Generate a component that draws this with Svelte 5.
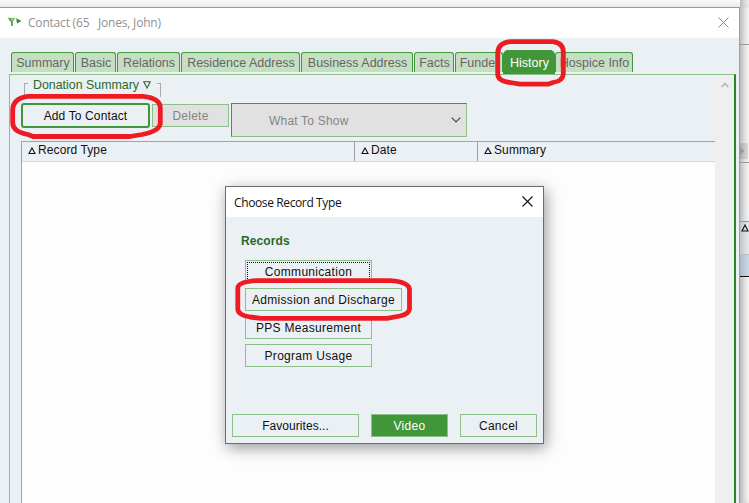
<script>
  const tabs = [
    { name: "Summary", width: 63 },
    { name: "Basic", width: 41 },
    { name: "Relations", width: 63 },
    { name: "Residence Address", width: 119 },
    { name: "Business Address", width: 112 },
    { name: "Facts", width: 40 },
    { name: "Funder", width: 48 },
    { name: "History", width: 52 },
    { name: "Hospice Info", width: 78 }
  ];

  const columns = [
    { name: "Record Type", width: 333 },
    { name: "Date", width: 123 },
    { name: "Summary", width: 237 }
  ];

  const records = [
    "Communication",
    "Admission and Discharge",
    "PPS Measurement",
    "Program Usage"
  ];

  let activeTab = $state("History");
  let showDialog = $state(true);
</script>

<div class="desktop">
  <div class="window">
    <header class="titlebar">
      <svg class="logo" width="14" height="10" viewBox="0 0 14 10">
        <path d="M0 0.5L5 1.5L7 0.5L6 3L4.8 4V9H3V5L1.5 3.5Z" fill="#4fa535" />
        <path d="M3 2.4L5 3.2" stroke="#fff" stroke-width="0.8" />
        <path d="M8.2 1.2L13.5 4L9 6.4Z" fill="#2f8a2f" />
      </svg>
      <span class="title">Contact (65&nbsp;&nbsp; Jones, John)</span>
      <svg class="close" width="11" height="11" viewBox="0 0 11 11">
        <path d="M0.5 0.5L10.5 10.5M10.5 0.5L0.5 10.5" stroke="#888" fill="none" />
      </svg>
    </header>

    <nav class="tabs">
      {#each tabs as tab}
        <button
          class="tab"
          class:active={tab.name === activeTab}
          style="width: {tab.width}px"
          onclick={() => (activeTab = tab.name)}
        >{tab.name}</button>
      {/each}
    </nav>

    <div class="panel">
      <div class="content">
        <div class="legend">
          <i class="bracket left"></i>
          <span>Donation Summary</span>
          <svg width="8" height="8" viewBox="0 0 8 8">
            <path d="M0.8 0.8H7.2L4 7Z" fill="none" stroke="#2a6a2a" stroke-width="1.1" />
          </svg>
          <i class="bracket right"></i>
        </div>

        <div class="toolbar">
          <button class="add" onclick={() => (showDialog = true)}>Add To Contact</button>
          <button class="delete" disabled>Delete</button>
          <button class="select" disabled>
            <span>What To Show</span>
            <svg width="10" height="6" viewBox="0 0 10 6">
              <path d="M0.7 0.7L5 5L9.3 0.7" fill="none" stroke="#444" stroke-width="1.1" />
            </svg>
          </button>
        </div>

        <div class="table">
          <div class="head">
            {#each columns as column}
              <div class="column" style="width: {column.width}px">
                <svg width="8" height="8" viewBox="0 0 8 8">
                  <path d="M4 1L7 6.5H1Z" fill="none" stroke="#111" stroke-width="1.1" />
                </svg>
                <span>{column.name}</span>
              </div>
            {/each}
          </div>
        </div>
      </div>
      <div class="scrollbar">
        <svg width="8" height="6" viewBox="0 0 8 6">
          <path d="M0.7 5L4 1.5L7.3 5" fill="none" stroke="#b5b5b5" stroke-width="1.8" />
        </svg>
      </div>
    </div>
  </div>

  <!-- strip of the window behind -->
  <div class="behind">
    <div class="blank"></div>
    <div class="pane"></div>
    <div class="hscroll">
      <svg width="5" height="8" viewBox="0 0 5 8"><path d="M0 0L4.5 4L0 8Z" fill="#999" /></svg>
    </div>
    <div class="pane2"></div>
    <div class="rowhead">
      <svg width="8" height="8" viewBox="0 0 8 8">
        <path d="M4 1L7 7H1Z" fill="none" stroke="#111" stroke-width="1.1" />
      </svg>
    </div>
    <div class="selected"></div>
    <div class="rest"></div>
  </div>

  {#if showDialog}
    <div class="dialog">
      <header class="dialog-title">
        <span>Choose Record Type</span>
        <button class="x" aria-label="Close" onclick={() => (showDialog = false)}>
          <svg width="11" height="11" viewBox="0 0 11 11">
            <path d="M0.5 0.5L10.5 10.5M10.5 0.5L0.5 10.5" stroke="#111" stroke-width="1.1" />
          </svg>
        </button>
      </header>
      <div class="dialog-body">
        <h2>Records</h2>
        <div class="records">
          {#each records as record, i}
            <button class="btn" class:focus={i === 0} class:wide={i === 1}>{record}</button>
          {/each}
        </div>
        <footer>
          <button class="btn favourites">Favourites...</button>
          <button class="btn video">Video</button>
          <button class="btn cancel" onclick={() => (showDialog = false)}>Cancel</button>
        </footer>
      </div>
    </div>
  {/if}

  <!-- red marker rings -->
  <svg class="marks" width="749" height="503" viewBox="0 0 749 503">
    <path d="M28 96.3H143Q160.3 98 160.3 108V123Q160 131 142 134.5L130 136.5H33L28 134.5Q13 132 12.7 123V110Q13 98 28 96.3Z" />
    <path d="M510 41.7H553Q563.3 43 563.3 52V74Q563 81 553 82.5L548 84.2H520L510 82.5Q497.7 81 497.7 74V53Q498 43 510 41.7Z" />
    <path d="M256 280.7H390Q409.5 282 409.5 290V309Q409 314 400 316L387 318.3H261L250 317Q238 315 237.8 309V288Q238 282 256 280.7Z" />
  </svg>
</div>

<style>
:global(body) {
  margin: 0;
}

.desktop {
  position: relative;
  display: flex;
  width: 749px;
  height: 503px;
  overflow: hidden;
  background: linear-gradient(#fafafa, #ebebeb 7px, #fafafa 8px);
  font-family: "Liberation Sans", Arial, sans-serif;
  font-size: 12px;
}

.desktop * {
  box-sizing: border-box;
}

button {
  padding: 0;
  margin: 0;
  border: none;
  font: inherit;
  white-space: nowrap;
}

svg {
  display: block;
  flex: none;
}

.window {
  display: flex;
  flex-direction: column;
  width: 740px;
  margin-top: 7px;
  border-top: 1px solid #999;
  border-right: 1px solid #9aa0a4;
  background-color: #ebf0f5;
}

.titlebar {
  display: flex;
  height: 30px;
  align-items: center;
  padding: 0 10px 0 8px;
  background-color: white;
  font-family: "Open Sans", "Noto Sans", sans-serif;
  color: #919191;
}

.logo {
  margin-top: -3px;
}

.title {
  margin: -2px 0 0 6px;
  letter-spacing: -0.2px;
  white-space: pre;
}

.close {
  margin-left: auto;
  margin-top: -1px;
}

.tabs {
  display: flex;
  align-items: flex-end;
  height: 36px;
  padding: 0 0 2px 11px;
  gap: 1px;
  margin-right: 80px;
}

.tab {
  height: 20px;
  flex: none;
  padding-left: 1px;
  border: 1px solid #41993b;
  border-bottom: none;
  border-radius: 3px 3px 0 0;
  background-color: #c5dfc2;
  color: #666;
  font-size: 12.5px;
}

.tab.active {
  height: 24px;
  margin: 0 -1px -2px;
  border-radius: 5px 5px 0 0;
  background-color: #41963a;
  color: white;
}

.panel {
  display: flex;
  flex: 1;
  margin: 0 3px 0 9px;
  border: 1px solid #8cc086;
  border-bottom: none;
  border-right: 2px solid #2a8523;
}

.content {
  display: flex;
  flex-direction: column;
  flex: 1;
  padding-left: 11px;
}

.legend {
  display: flex;
  height: 28px;
  padding-left: 3px;
  align-items: flex-start;
  color: #2a6a2a;
  font-size: 12.4px;
  line-height: 20px;
}

.legend svg {
  margin: 6px 0 0 4px;
}

.bracket {
  width: 4px;
  height: 14px;
  margin-top: 8px;
  border: 1px solid #aaa;
  border-bottom: none;
}

.bracket.left {
  border-right: none;
  border-top-left-radius: 1px;
  margin-right: 5px;
}

.bracket.right {
  border-left: none;
  margin-left: 6px;
}

.toolbar {
  display: flex;
  height: 38px;
  align-items: flex-start;
}

.add {
  width: 129px;
  height: 25px;
  border: 2px solid #41963a;
  border-radius: 3px;
  background-color: #ebf0f5;
  color: #111;
  letter-spacing: 0.13px;
}

.delete {
  width: 77px;
  height: 23px;
  margin: 1px 2px 0;
  border: 1px solid #8cc086;
  background-color: #e1e1e1;
  color: #858585;
  letter-spacing: 0.25px;
}

.select {
  display: flex;
  align-items: center;
  justify-content: space-between;
  width: 236px;
  height: 34px;
  padding: 0 5px 0 37px;
  border: 1px solid #8cc086;
  border-top-color: #41963a;
  border-left-color: #41963a;
  background-color: #e1e1e1;
  color: #858585;
  letter-spacing: 0.2px;
}

.select span {
  margin-top: 1px;
}

.table {
  flex: 1;
  border-top: 1px solid #a0a4a8;
  border-left: 1px solid #a0a4a8;
  background-color: #fdfdfd;
}

.head {
  display: flex;
  height: 20px;
  border-bottom: 1px solid #d5d9dc;
  background-color: #ebf0f5;
  color: #111;
}

.column {
  display: flex;
  height: 19px;
  padding-left: 6px;
  align-items: center;
  gap: 2px;
  border-right: 1px solid #a0a4a8;
  line-height: 17px;
  letter-spacing: 0.1px;
}

.column:last-child {
  border-right: none;
}

.column svg {
  margin-top: -2px;
}

.column span {
  margin-top: -2px;
}

.scrollbar {
  display: flex;
  width: 19px;
  justify-content: center;
  padding-top: 7px;
  background-color: #efefef;
}

.behind {
  display: flex;
  flex-direction: column;
  width: 9px;
  box-shadow: inset 8px 0 8px -5px #aaa;
}

.blank {
  height: 45px;
  border-bottom: 1px solid #999;
}

.pane {
  height: 98px;
}

.hscroll {
  height: 16px;
  margin-right: 1px;
  padding-top: 4px;
  background-color: rgba(0, 0, 0, 0.1);
}

.pane2 {
  height: 60px;
  border-top: 1px solid #999;
  margin-top: 3px;
  border-bottom: 1px solid #999;
}

.rowhead {
  height: 33px;
  padding: 2px 0 0 1px;
  border-bottom: 1px solid #bbb;
  background-color: rgba(200, 212, 222, 0.35);
}

.selected {
  height: 22px;
  border-bottom: 1px solid #111;
  background-color: rgba(150, 180, 210, 0.45);
}

.rest {
  flex: 1;
}

/* sits over the contact window */
.dialog {
  position: absolute;
  left: 225px;
  top: 186px;
  display: flex;
  flex-direction: column;
  width: 319px;
  height: 258px;
  border: 1px solid #6c6c6c;
  background-color: #ebf0f5;
  box-shadow: 2px 4px 14px rgba(0, 0, 0, 0.4);
}

.dialog-title {
  display: flex;
  height: 30px;
  align-items: center;
  justify-content: space-between;
  padding: 0 10px 0 8px;
  background-color: white;
  color: #111;
  font-family: "Open Sans", "Noto Sans", sans-serif;
  letter-spacing: -0.38px;
}

.x {
  background: none;
  margin-top: -2px;
}

.dialog-body {
  display: flex;
  flex: 1;
  flex-direction: column;
  padding: 0 6px 6px;
}

h2 {
  margin: 16px 0 0 9px;
  font-size: 12px;
  line-height: 16px;
  letter-spacing: 0.1px;
  color: #256b25;
}

.records {
  display: flex;
  flex-direction: column;
  gap: 5px;
  margin: 11px 0 0 13px;
}

.btn {
  width: 127px;
  height: 23px;
  border: 1px solid #8cc086;
  background-color: #ebf0f5;
  color: #111;
  letter-spacing: 0.3px;
}

.btn.wide {
  width: 157px;
}

.btn.favourites {
  letter-spacing: 0.05px;
}

.btn.focus {
  outline: 1px dotted #111;
  outline-offset: -3px;
}

footer {
  display: flex;
  margin-top: auto;
}

.btn.video {
  width: 77px;
  margin: 0 12px;
  background-color: #41963a;
  color: white;
}

.btn.cancel {
  width: 77px;
}

.marks {
  position: absolute;
  left: 0;
  top: 0;
  pointer-events: none;
}

.marks path {
  fill: none;
  stroke: #ed1c24;
  stroke-width: 4.8;
  stroke-linejoin: round;
}
</style>
